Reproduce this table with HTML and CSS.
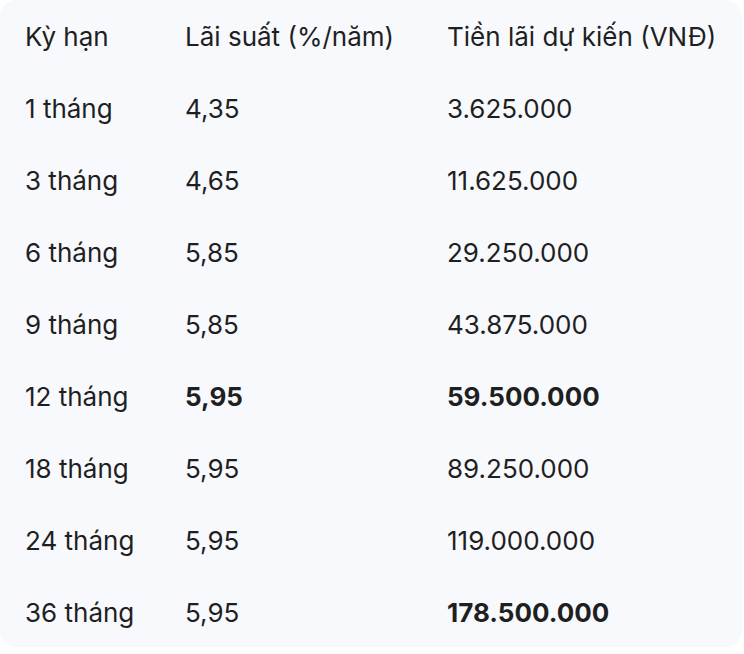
FILE: index.html
```html
<!DOCTYPE html>
<html lang="vi">
<head>
<meta charset="utf-8">
<link rel="stylesheet" href="styles.css">
</head>
<body>
<div class="card">
  <table class="rates">
    <thead>
      <tr><th>Kỳ hạn</th><th>Lãi suất (%/năm)</th><th>Tiền lãi dự kiến (VNĐ)</th></tr>
    </thead>
    <tbody>
      <tr><td>1 tháng</td><td>4,35</td><td>3.625.000</td></tr>
      <tr><td>3 tháng</td><td>4,65</td><td>11.625.000</td></tr>
      <tr><td>6 tháng</td><td>5,85</td><td>29.250.000</td></tr>
      <tr><td>9 tháng</td><td>5,85</td><td>43.875.000</td></tr>
      <tr><td>12 tháng</td><td><b>5,95</b></td><td><b>59.500.000</b></td></tr>
      <tr><td>18 tháng</td><td>5,95</td><td>89.250.000</td></tr>
      <tr><td>24 tháng</td><td>5,95</td><td>119.000.000</td></tr>
      <tr><td>36 tháng</td><td>5,95</td><td><b>178.500.000</b></td></tr>
    </tbody>
  </table>
</div>
</body>
</html>
```
FILE: styles.css
```css
html, body {
  margin: 0;
  padding: 0;
  background: #ffffff;
}
body {
  font-family: Inter, Roboto, "Noto Sans", sans-serif;
  color: #1f1f1f;
}
.card {
  width: 742px;
  height: 647px;
  box-sizing: border-box;
  background: #f8f9fd;
  border-radius: 16px;
}
.rates {
  border-collapse: collapse;
  font-size: 26px;
}
.rates th {
  font-weight: 400;
  text-align: left;
  height: 72px;
  padding: 0;
  vertical-align: middle;
}
.rates td {
  height: 72px;
  padding: 0;
  vertical-align: middle;
}
.rates th:nth-child(1), .rates td:nth-child(1) {
  padding-left: 25px;
  width: 160px;
}
.rates th:nth-child(2), .rates td:nth-child(2) {
  width: 262px;
}
.rates th:nth-child(3), .rates td:nth-child(3) {
  white-space: nowrap;
}
.rates b {
  font-weight: 700;
}
```
